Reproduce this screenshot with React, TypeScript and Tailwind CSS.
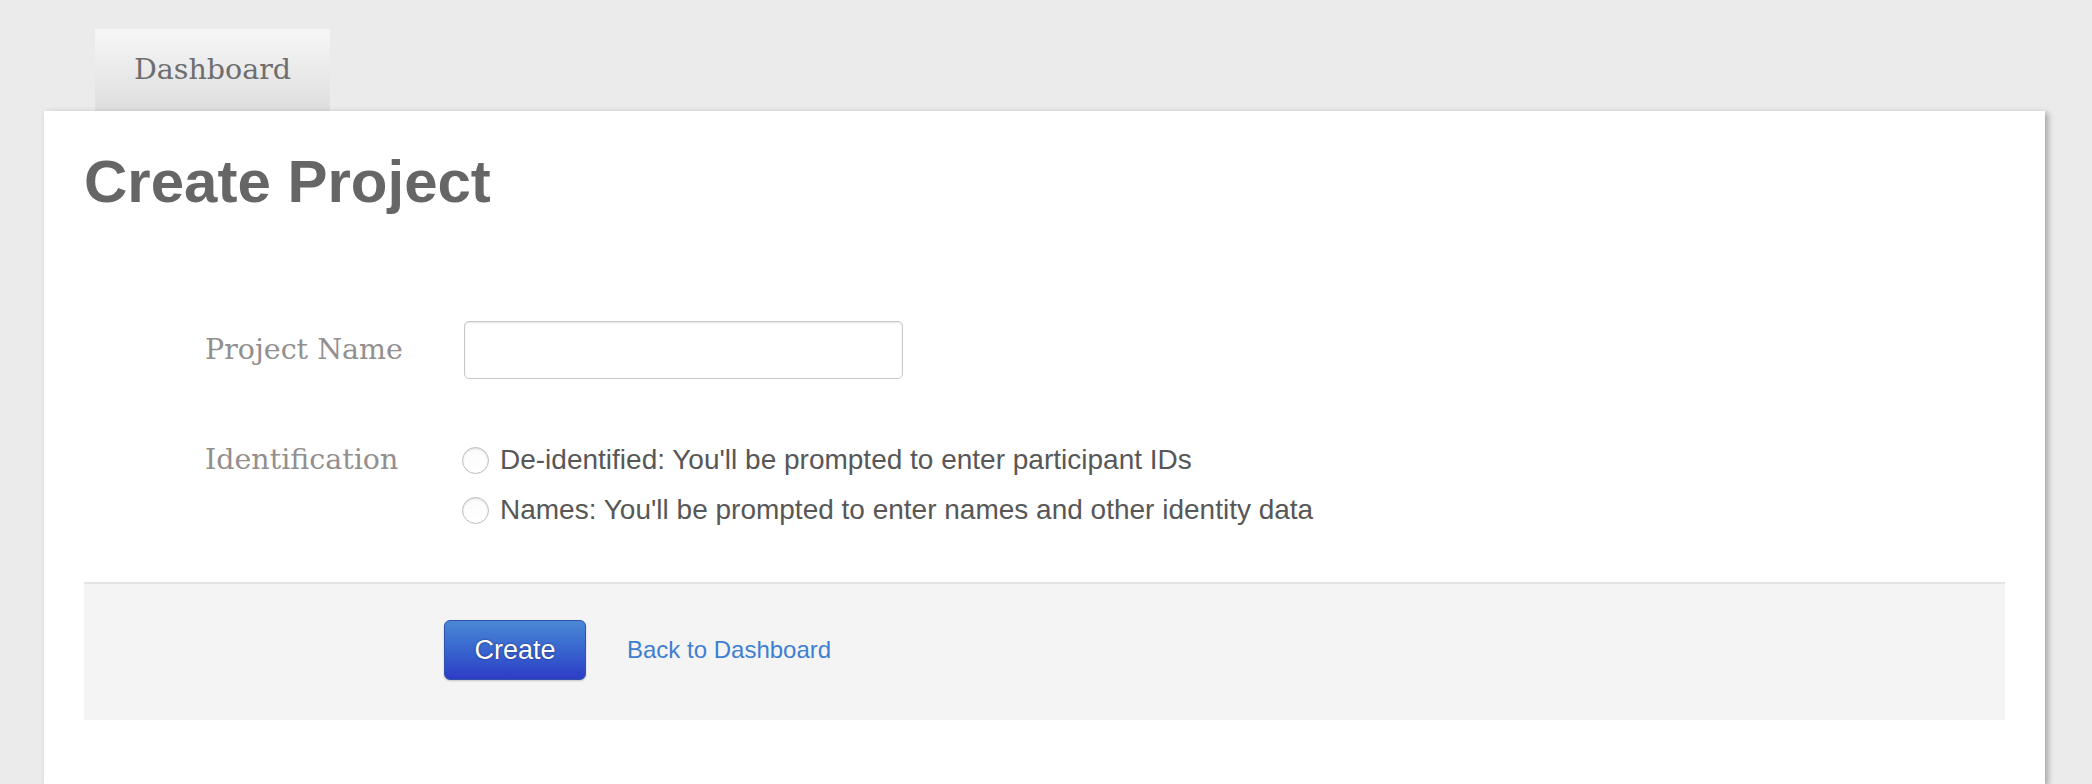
import React from "react";

const serif = "font-['DejaVu_Serif',Georgia,serif]";
const sans = "font-['Liberation_Sans',Arial,Helvetica,sans-serif]";

function Radio({ label }: { label: string }) {
  return (
    <label className="flex h-[50px] items-center cursor-pointer">
      <span className="h-[27px] w-[27px] rounded-full border border-[#bdbdbd] bg-linear-to-b from-[#fbfbfb] to-white shadow-[inset_0_1px_2px_rgba(0,0,0,0.12)]" />
      <span className={`${sans} ml-[11px] text-[28px] text-[#575757]`}>{label}</span>
    </label>
  );
}

export default function App() {
  return (
    <div className="flex h-screen flex-col overflow-hidden bg-[#ebebeb]">
      <div className="pl-[95px] pt-[29px]">
        <div className="flex h-[82px] w-[235px] items-center justify-center bg-linear-to-b from-[#f7f7f7] to-[#dedede]">
          <span className={`${serif} text-[28.5px] text-[#6e6e6e]`}>Dashboard</span>
        </div>
      </div>

      <div className="ml-[44px] w-[2001px] flex-1 bg-white px-[40px] pt-[41px] shadow-[3px_2px_6px_rgba(0,0,0,0.3)]">
        <h1 className={`${sans} text-[60px] font-bold leading-none text-[#666]`}>
          Create Project
        </h1>

        <div className="mt-[109px] flex items-center pl-[121px]">
          <div className={`${serif} w-[259px] text-[28.5px] text-[#938f8f]`}>Project Name</div>
          <input
            type="text"
            className="h-[58px] w-[439px] rounded-[5px] border border-[#c8c8c8] bg-white px-3 shadow-[inset_0_1px_2px_rgba(0,0,0,0.1)] outline-none"
          />
        </div>

        <div className="mt-[56px] flex items-start pl-[121px]">
          <div className={`${serif} flex h-[50px] w-[257px] items-center text-[28.5px] text-[#938f8f]`}>
            Identification
          </div>
          <div className="flex flex-col">
            <Radio label="De-identified: You'll be prompted to enter participant IDs" />
            <Radio label="Names: You'll be prompted to enter names and other identity data" />
          </div>
        </div>

        <div className="mt-[47px] flex items-center border-t-2 border-[#e4e4e4] bg-[#f4f4f4] pb-[40px] pl-[360px] pt-[36px]">
          <button
            className={`${sans} h-[60px] w-[142px] rounded-[6px] border border-[#3052ab] bg-linear-to-b from-[#4a88d5] to-[#2e3bc6] text-[27px] text-white shadow-[0_1px_2px_rgba(0,0,0,0.2)] [text-shadow:0_0_2px_rgba(0,0,40,0.6)]`}
          >
            Create
          </button>
          <a href="#" className={`${sans} ml-[41px] text-[24px] text-[#3f7fd1]`}>
            Back to Dashboard
          </a>
        </div>
      </div>
    </div>
  );
}
